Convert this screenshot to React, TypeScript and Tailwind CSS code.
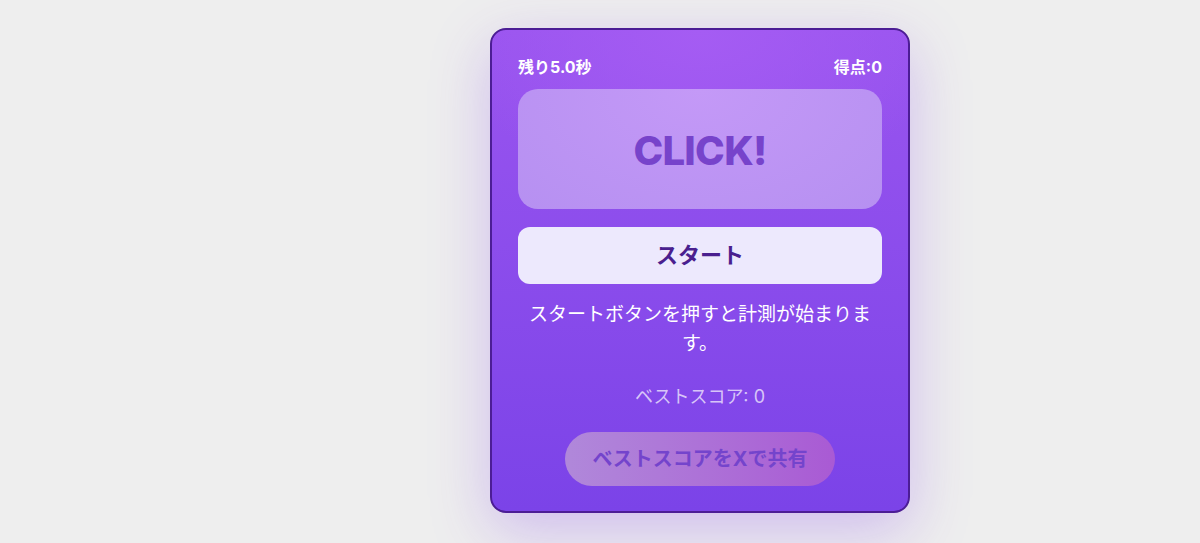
import React from 'react';

const font = { fontFamily: '"Inter", "Noto Sans CJK JP", sans-serif' };

const ClickGame: React.FC = () => {
  const timeLeft = 5.0;
  const score = 0;
  const best = 0;

  return (
    <div
      className="w-[420px] rounded-2xl border-2 border-[#4c1d95] px-[26px] pt-[26px] pb-[25px] bg-[radial-gradient(ellipse_60%_35%_at_50%_0%,#a55cf3,transparent),linear-gradient(to_bottom,#9a55ef,#7b43e8)] shadow-[0_18px_60px_rgba(124,58,237,0.28)]"
      style={font}
    >
      <div className="flex justify-between items-center h-[22px] text-[16px] font-bold text-white">
        <span>残り{timeLeft.toFixed(1)}秒</span>
        <span>得点:{score}</span>
      </div>

      <div className="mt-[11px] h-[120px] rounded-[20px] bg-[radial-gradient(ellipse_at_top,#c499f7,#b690f1)] flex items-center justify-center pt-[3px]">
        <span className="text-[40px] leading-none font-extrabold tracking-[-0.7px] text-[#7743cb]">CLICK!</span>
      </div>

      <button className="mt-[18px] w-full h-[57px] rounded-xl bg-[#ede9fd] text-[22px] font-bold text-[#4a1f8f]">
        スタート
      </button>

      <p className="mt-[16px] text-center text-[19px] leading-[29px] text-white">
        スタートボタンを押すと計測が始まります。
      </p>

      <p className="mt-[26px] text-center text-[18px] leading-[26px] text-white/70">
        ベストスコア: {best}
      </p>

      <div className="mt-[22px] flex justify-center">
        <button
          disabled
          className="w-[270px] h-[54px] rounded-full bg-gradient-to-r from-[#b088da] to-[#a95ad4] text-[20px] font-bold text-[#7444cc]"
        >
          ベストスコアをXで共有
        </button>
      </div>
    </div>
  );
};

export default function App() {
  return (
    <div className="min-h-[543px] bg-[#eeeeee] pl-[490px] pt-[28px]">
      <ClickGame />
    </div>
  );
}
